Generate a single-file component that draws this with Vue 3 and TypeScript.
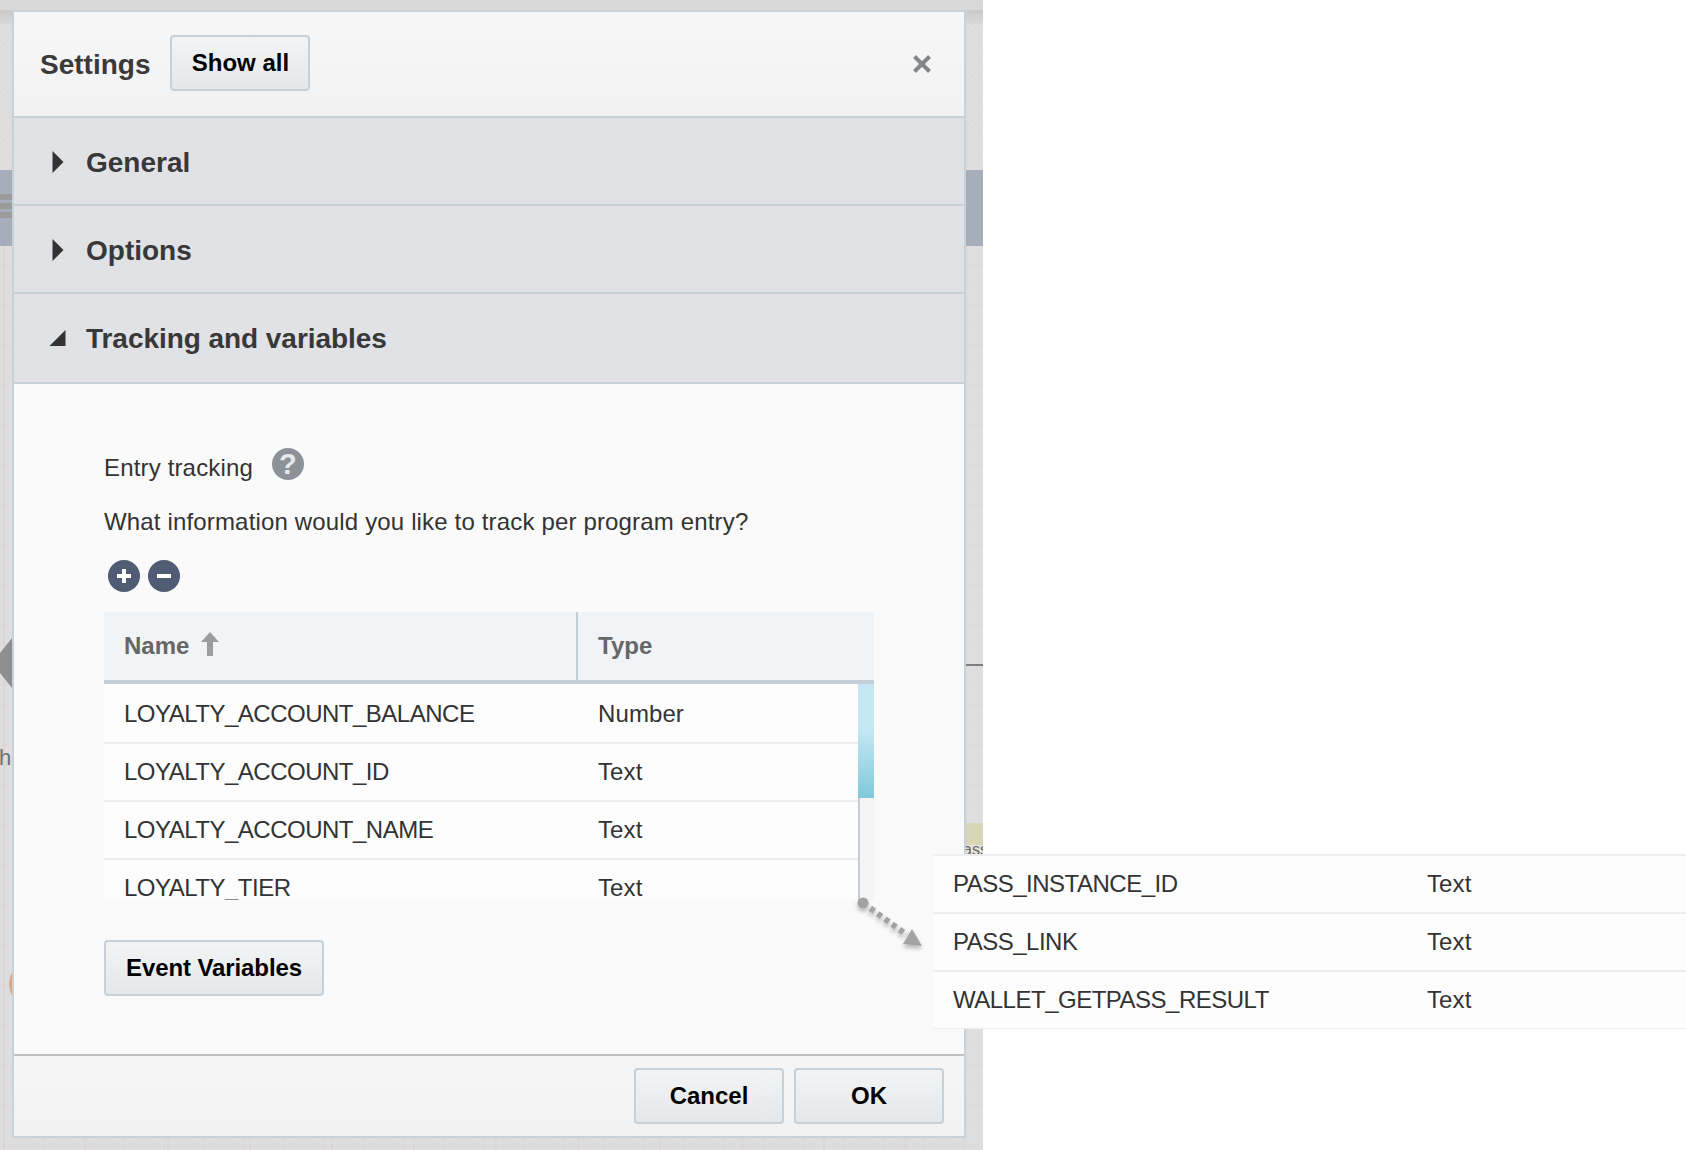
<script setup lang="ts">
interface Row { name: string; type: string }
const rows: Row[] = [
  { name: 'LOYALTY_ACCOUNT_BALANCE', type: 'Number' },
  { name: 'LOYALTY_ACCOUNT_ID', type: 'Text' },
  { name: 'LOYALTY_ACCOUNT_NAME', type: 'Text' },
  { name: 'LOYALTY_TIER', type: 'Text' },
]
const extraRows: Row[] = [
  { name: 'PASS_INSTANCE_ID', type: 'Text' },
  { name: 'PASS_LINK', type: 'Text' },
  { name: 'WALLET_GETPASS_RESULT', type: 'Text' },
]
</script>

<template>
  <div class="page">
    <div class="canvas">
      <div class="top-strip"></div>
      <div class="hatch hatch-left"></div>
      <div class="hatch hatch-right"></div>
      <div class="band band-left"><i></i><i></i><i></i></div>
      <div class="band band-right"></div>
      <div class="side-arrow"></div>
      <div class="side-text">he</div>
      <div class="side-circle"></div>
      <div class="side-line"></div>
      <div class="side-note"><span>ass</span></div>

      <section class="dialog">
        <header class="head">
          <h1 class="title">Settings</h1>
          <button class="btn show-all">Show all</button>
          <svg class="close" width="20" height="20" viewBox="0 0 20 20">
            <path d="M2.5 2.5 17.5 17.5M17.5 2.5 2.5 17.5" stroke="#83868a" stroke-width="4" fill="none" />
          </svg>
        </header>

        <div class="acc acc-a">
          <svg class="caret" width="14" height="24" viewBox="0 0 14 24"><path d="M1.5 1 12.5 12 1.5 23Z" fill="#333" /></svg>
          <span class="acc-label">General</span>
        </div>
        <div class="acc acc-a">
          <svg class="caret" width="14" height="24" viewBox="0 0 14 24"><path d="M1.5 1 12.5 12 1.5 23Z" fill="#333" /></svg>
          <span class="acc-label">Options</span>
        </div>
        <div class="acc acc-b">
          <svg class="caret-open" width="18" height="18" viewBox="0 0 18 18"><path d="M16.5 1V17H.5Z" fill="#333" /></svg>
          <span class="acc-label">Tracking and variables</span>
        </div>

        <div class="body">
          <div class="entry-row">
            <span class="text">Entry tracking</span>
            <span class="help">?</span>
          </div>
          <p class="question text">What information would you like to track per program entry?</p>
          <div class="tools">
            <svg class="tool" width="32" height="32" viewBox="0 0 32 32">
              <circle cx="16" cy="16" r="16" fill="#4f5c74" />
              <path d="M16 9v14M9 16h14" stroke="#fff" stroke-width="4" />
            </svg>
            <svg class="tool" width="32" height="32" viewBox="0 0 32 32">
              <circle cx="16" cy="16" r="16" fill="#4f5c74" />
              <path d="M9 16h14" stroke="#fff" stroke-width="4" />
            </svg>
          </div>

          <div class="table">
            <div class="thead">
              <div class="th th-name">
                <span>Name</span>
                <svg width="20" height="26" viewBox="0 0 20 26"><path d="M10 0 19 10H13V24H7V10H1Z" fill="#9b9ea1" /></svg>
              </div>
              <div class="th th-type">Type</div>
            </div>
            <div class="tbody">
              <div v-for="row in rows" :key="row.name" class="row">
                <span class="cell-name">{{ row.name }}</span>
                <span class="cell-type">{{ row.type }}</span>
              </div>
              <div class="scroll"><div class="thumb"></div></div>
            </div>
          </div>

          <button class="btn event">Event Variables</button>
        </div>

        <footer class="foot">
          <button class="btn foot-btn">Cancel</button>
          <button class="btn foot-btn">OK</button>
        </footer>
      </section>
    </div>

    <svg class="pointer" width="80" height="64" viewBox="0 0 80 64">
      <defs>
        <filter id="soft" x="-20%" y="-20%" width="140%" height="150%">
          <feDropShadow dx="0" dy="3" stdDeviation="2" flood-color="#000" flood-opacity=".28" />
        </filter>
      </defs>
      <g filter="url(#soft)" fill="#a3a3a3">
        <circle cx="11" cy="7" r="5.5" />
        <path d="M11 7 55 39" stroke="#a3a3a3" stroke-width="6" stroke-dasharray="5 4" fill="none" />
        <path d="M60 33 70 50 51 48Z" />
      </g>
    </svg>

    <div class="extra">
      <div v-for="row in extraRows" :key="row.name" class="extra-row">
        <span class="cell-name">{{ row.name }}</span>
        <span class="cell-type">{{ row.type }}</span>
      </div>
    </div>
  </div>
</template>

<style>
html, body { margin: 0; background: #fff; }
</style>

<style scoped>
.page {
  position: relative;
  width: 1686px;
  height: 1150px;
  overflow: hidden;
  background: #fff;
  font-family: "Liberation Sans", Arial, sans-serif;
}
.canvas {
  position: relative;
  box-sizing: border-box;
  width: 983px;
  height: 1150px;
  padding: 10px 0 0 12px;
  overflow: hidden;
  background-color: #dedede;
  background-image:
    linear-gradient(90deg, rgba(222, 208, 208, .5) 2px, transparent 2px),
    linear-gradient(rgba(220, 214, 214, .45) 2px, transparent 2px),
    linear-gradient(90deg, rgba(216, 216, 216, .4) 2px, transparent 2px);
  background-size: 82px 20px, 20px 20px, 20px 20px;
  background-position: 3px 0, 0 4px, 3px 0;
}
.top-strip {
  position: absolute;
  inset: 0 0 auto 0;
  height: 24px;
  background: linear-gradient(#d9d9d9 0, #d9d9d9 10px, #c9c9c9 10px, #d9d9d9 24px);
}
.hatch {
  position: absolute;
  top: 24px;
  height: 146px;
  background: repeating-linear-gradient(135deg, #dcdcdc 0 2px, #dfdfdf 2px 4px);
}
.hatch-left { left: 0; width: 12px; }
.hatch-right { left: 966px; width: 17px; }
.band {
  position: absolute;
  top: 170px;
  height: 76px;
  background: #a6adbb;
}
.band-left { left: 0; width: 12px; }
.band-left i {
  display: block;
  height: 6px;
  margin-bottom: 3px;
  background: #9b9b9b;
}
.band-left i:first-child { margin-top: 24px; }
.band-right { left: 966px; width: 17px; }
.side-arrow {
  position: absolute;
  left: 0;
  top: 638px;
  width: 12px;
  height: 50px;
  background: #8f8f8f;
  clip-path: polygon(100% 0, 100% 100%, 0 70%, 0 30%);
}
.side-text {
  position: absolute;
  left: -1px;
  top: 744px;
  width: 13px;
  overflow: hidden;
  color: #6f6f6f;
  font-size: 22px;
  line-height: 28px;
}
.side-circle {
  position: absolute;
  left: 9px;
  top: 962px;
  width: 44px;
  height: 44px;
  border-radius: 50%;
  background: #dfa585;
}
.side-line {
  position: absolute;
  left: 966px;
  top: 664px;
  width: 17px;
  height: 2px;
  background: #7e7e7e;
}
.side-note {
  position: absolute;
  left: 966px;
  top: 823px;
  width: 17px;
  height: 31px;
  overflow: hidden;
  background: linear-gradient(#d9d6b6 0 22px, #e6e6e0 22px);
  color: #666;
  font-size: 16px;
}
.side-note span { position: absolute; left: -3px; top: 18px; white-space: nowrap; }

.dialog {
  position: relative;
  z-index: 1;
  box-sizing: border-box;
  width: 954px;
  height: 1128px;
  display: flex;
  flex-direction: column;
  border: 2px solid #c6d1d9;
  background: #fafafa;
  color: #333;
}
.head {
  box-sizing: border-box;
  height: 106px;
  flex: none;
  display: flex;
  align-items: center;
  padding: 0 32px 0 26px;
  border-bottom: 2px solid #c6d1d9;
  background: linear-gradient(#f7f7f7, #f2f2f2);
}
.title {
  margin: 2px 20px 0 0;
  font-size: 28px;
  font-weight: 700;
  line-height: 34px;
  color: #3a3a3a;
}
.close { margin-left: auto; }
.btn {
  box-sizing: border-box;
  height: 56px;
  padding: 0;
  border: 2px solid #c6d1d9;
  border-radius: 4px;
  background: linear-gradient(#f2f4f5, #e5e8eb);
  color: #000;
  font: 700 24px "Liberation Sans", Arial, sans-serif;
}
.show-all { width: 140px; margin-top: -2px; }
.acc {
  box-sizing: border-box;
  flex: none;
  display: flex;
  align-items: center;
  padding-left: 37px;
  border-bottom: 2px solid #c6d1d9;
  background: #e0e2e6;
  color: #383838;
  font-size: 28px;
  font-weight: 700;
}
.acc-label { margin-top: 3px; }
.acc-a { height: 88px; }
.acc-b { height: 90px; }
.acc-b .acc-label { margin-top: 2px; letter-spacing: -.05px; }
.caret { margin: 2px 21px 0 0; flex: none; }
.caret-open { margin: 0 19px 0 -2px; flex: none; }

.body {
  box-sizing: border-box;
  flex: 1;
  display: flex;
  flex-direction: column;
  align-items: flex-start;
  padding: 64px 0 0 90px;
  border-bottom: 2px solid #c0c0c0;
}
.text { font-size: 24px; line-height: 32px; color: #333; letter-spacing: .16px; }
.entry-row { display: flex; height: 32px; }
.entry-row .text { margin-top: 4px; }
.help {
  width: 32px;
  height: 32px;
  margin-left: 19px;
  border-radius: 50%;
  background: #8c9297;
  color: #e8e9ea;
  font-size: 29px;
  font-weight: 700;
  line-height: 32px;
  text-align: center;
  letter-spacing: 0;
}
.question { margin: 26px 0 0; }
.tools { display: flex; gap: 8px; margin: 22px 0 0 4px; height: 32px; }
.tool { display: block; }

.table { width: 770px; margin-top: 20px; }
.thead {
  box-sizing: border-box;
  display: flex;
  height: 72px;
  border-bottom: 4px solid #c3cfd6;
  background: #f1f4f7;
  color: #666;
  font-size: 24px;
  font-weight: 700;
}
.th { display: flex; align-items: center; box-sizing: border-box; }
.th-name {
  width: 474px;
  gap: 11px;
  padding-left: 20px;
  border-right: 2px solid #c3cfd6;
}
.th-name svg { margin-top: -3px; }
.th-type { padding-left: 20px; }
.tbody {
  position: relative;
  height: 216px;
  box-sizing: border-box;
  overflow: hidden;
  padding: 2px 16px 0 0;
  background: #fdfdfe;
  font-size: 24px;
  color: #333;
}
.row,
.extra-row {
  box-sizing: border-box;
  display: flex;
  align-items: center;
  height: 58px;
  border-bottom: 2px solid #eceef0;
}
.cell-name {
  width: 474px;
  padding-left: 20px;
  box-sizing: border-box;
  flex: none;
  letter-spacing: -.5px;
}
.cell-type { margin-left: 20px; letter-spacing: .1px; }
.scroll {
  position: absolute;
  right: 0;
  top: 0;
  bottom: 0;
  box-sizing: border-box;
  width: 16px;
  border-left: 2px solid #c3cfd6;
  background: #f5f5f5;
}
.thumb {
  height: 114px;
  margin-left: -2px;
  background: linear-gradient(#c5e7f3 0, #c5e7f3 40%, #80c9da 100%);
}
.event { width: 220px; margin-top: 40px; letter-spacing: -.1px; }
.foot {
  box-sizing: border-box;
  flex: 1;
  max-height: 80px;
  display: flex;
  justify-content: flex-end;
  gap: 10px;
  padding: 12px 20px 0 0;
  background: linear-gradient(#f6f6f6, #f2f2f2);
}
.foot-btn { width: 150px; }

.pointer {
  position: absolute;
  z-index: 2;
  left: 852px;
  top: 896px;
}
.extra {
  position: absolute;
  z-index: 2;
  left: 933px;
  right: 0;
  top: 854px;
  border-top: 2px solid #eceef0;
  background: #fdfdfe;
  font-size: 24px;
  color: #333;
}
.extra-row:last-child { height: 57px; border-bottom-width: 1px; }
</style>
